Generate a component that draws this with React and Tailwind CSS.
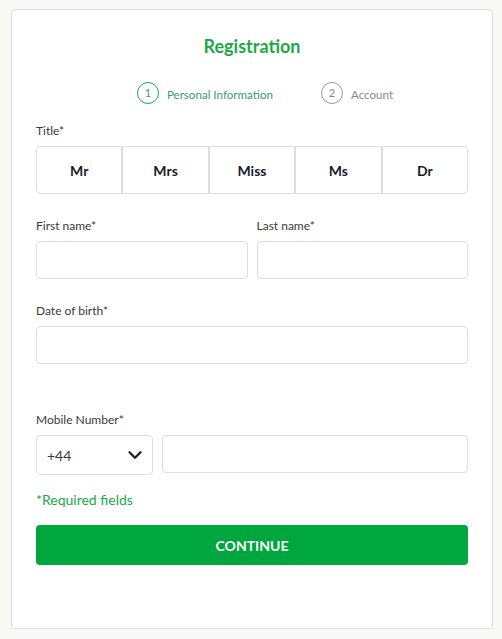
import { ChevronDown } from "lucide-react"

const titles = ["Mr", "Mrs", "Miss", "Ms", "Dr"]

function Label({ children }) {
  return <label className="block text-[12px] leading-[16px] text-[#3a3a3a] mb-[7px]">{children}</label>
}

export default function App() {
  return (
    <div className="min-h-[639px] bg-[#f8f8f7] pt-[9px] pl-[11px] pr-[9px] pb-[9px]" style={{ fontFamily: "Lato, 'Noto Sans', sans-serif" }}>
      <div className="bg-white border border-[#dcdcdc] rounded-[4px] px-[24px] pt-[24px] pb-[63px]">
        <h1 className="text-center text-[18px] font-bold text-[#1ea84a] leading-[24px]">Registration</h1>

        <div className="flex justify-center items-center gap-[48px] mt-[24px] ml-[26px]">
          <div className="flex items-center gap-[8px]">
            <span className="w-[22px] h-[22px] rounded-full border border-[#1ea84a] flex items-center justify-center text-[11px] text-[#3d9a75]">1</span>
            <span className="mt-[3px] text-[11.6px] text-[#3d9a75]">Personal Information</span>
          </div>
          <div className="flex items-center gap-[8px]">
            <span className="w-[22px] h-[22px] rounded-full border border-[#9a9a9a] flex items-center justify-center text-[11px] text-[#8a8a8a]">2</span>
            <span className="mt-[3px] text-[11.6px] text-[#8a8a8a]">Account</span>
          </div>
        </div>

        <div className="mt-[19px]">
          <Label>Title*</Label>
          <div className="grid grid-cols-5">
            {titles.map((t, i) => (
              <button
                key={t}
                className={`h-[48px] border border-[#dedede] bg-white text-[14px] font-bold text-[#1c1c2c] ${i === 0 ? "rounded-l-[4px]" : ""} ${i === 4 ? "rounded-r-[4px]" : ""}`}
              >
                {t}
              </button>
            ))}
          </div>
        </div>

        <div className="grid grid-cols-2 gap-[9px] mt-[24px]">
          <div>
            <Label>First name*</Label>
            <input className="block w-full h-[38px] border border-[#dedede] rounded-[4px]" />
          </div>
          <div>
            <Label>Last name*</Label>
            <input className="block w-full h-[38px] border border-[#dedede] rounded-[4px]" />
          </div>
        </div>

        <div className="mt-[24px]">
          <Label>Date of birth*</Label>
          <input className="block w-full h-[38px] border border-[#dedede] rounded-[4px]" />
        </div>

        <div className="mt-[48px]">
          <Label>Mobile Number*</Label>
          <div className="flex gap-[9px] items-start">
            <div className="w-[117px] h-[40px] border border-[#dedede] rounded-[4px] flex items-center justify-between pl-[10px] pr-[6px]">
              <span className="text-[14px] text-[#3a3a3a]">+44</span>
              <ChevronDown className="w-[22px] h-[22px] text-[#222]" strokeWidth={2.6} />
            </div>
            <input className="block flex-1 h-[38px] border border-[#dedede] rounded-[4px]" />
          </div>
        </div>

        <p className="mt-[15px] text-[14px] leading-[20px] text-[#1ea84a]">*Required fields</p>

        <button className="block mt-[15px] w-full h-[40px] bg-[#00a63e] rounded-[4px] text-white text-[14px] font-bold">CONTINUE</button>
      </div>
    </div>
  )
}
